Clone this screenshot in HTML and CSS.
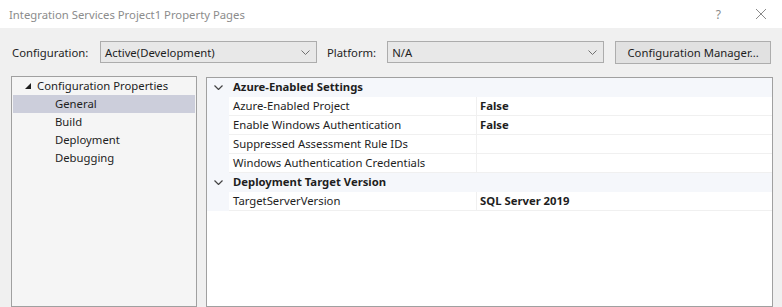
FILE: index.html
```html
<!DOCTYPE html>
<html lang="en">
<head>
  <meta charset="UTF-8" />
  <title>Integration Services Project1 Property Pages</title>
  <link rel="stylesheet" href="styles.css">
</head>
<body>
  <div class="dialog">
    <div class="titlebar">
      <span class="title">Integration Services Project1 Property Pages</span>
      <span class="help">?</span>
      <svg class="close" width="12" height="12" viewBox="0 0 12 12">
        <path d="M1 1 L11 11 M11 1 L1 11" stroke="#8a8a8a" stroke-width="1" fill="none"/>
      </svg>
    </div>

    <div class="toolbar">
      <span class="label">Configuration:</span>
      <div class="combo combo-config">
        <span>Active(Development)</span>
        <svg width="9" height="5" viewBox="0 0 9 5"><path d="M0.5 0.5 L4.5 4.5 L8.5 0.5" stroke="#707070" fill="none"/></svg>
      </div>
      <span class="label label-platform">Platform:</span>
      <div class="combo combo-platform">
        <span>N/A</span>
        <svg width="9" height="5" viewBox="0 0 9 5"><path d="M0.5 0.5 L4.5 4.5 L8.5 0.5" stroke="#707070" fill="none"/></svg>
      </div>
      <button class="btn">Configuration Manager...</button>
    </div>

    <div class="main">
      <div class="tree">
        <div class="tree-item root">
          <svg class="expander" width="6" height="6" viewBox="0 0 6 6"><polygon points="6,0 6,6 0,6" fill="#1e1e1e"/></svg>
          Configuration Properties
        </div>
        <div class="tree-item child selected">General</div>
        <div class="tree-item child">Build</div>
        <div class="tree-item child">Deployment</div>
        <div class="tree-item child">Debugging</div>
      </div>

      <div class="grid">
        <div class="row category">
          <div class="gutter"><svg width="9" height="5" viewBox="0 0 9 5"><path d="M0.5 0.5 L4.5 4.5 L8.5 0.5" stroke="#444" stroke-width="1.2" fill="none"/></svg></div>
          <div class="cat-name">Azure-Enabled Settings</div>
        </div>
        <div class="row">
          <div class="gutter"></div>
          <div class="name">Azure-Enabled Project</div>
          <div class="value">False</div>
        </div>
        <div class="row">
          <div class="gutter"></div>
          <div class="name">Enable Windows Authentication</div>
          <div class="value">False</div>
        </div>
        <div class="row">
          <div class="gutter"></div>
          <div class="name">Suppressed Assessment Rule IDs</div>
          <div class="value"></div>
        </div>
        <div class="row">
          <div class="gutter"></div>
          <div class="name">Windows Authentication Credentials</div>
          <div class="value"></div>
        </div>
        <div class="row category">
          <div class="gutter"><svg width="9" height="5" viewBox="0 0 9 5"><path d="M0.5 0.5 L4.5 4.5 L8.5 0.5" stroke="#444" stroke-width="1.2" fill="none"/></svg></div>
          <div class="cat-name">Deployment Target Version</div>
        </div>
        <div class="row">
          <div class="gutter"></div>
          <div class="name">TargetServerVersion</div>
          <div class="value">SQL Server 2019</div>
        </div>
      </div>
    </div>
  </div>
</body>
</html>
```

FILE: styles.css
```css
body {
  margin: 0;
  font-family: "Noto Sans", "Open Sans", sans-serif;
  font-size: 11.3px;
  color: #1e1e1e;
  background: #f0f0f0;
}

.dialog {
  width: 782px;
  height: 307px;
  overflow: hidden;
  display: flex;
  flex-direction: column;
}

.titlebar {
  height: 28px;
  background: #ffffff;
  display: flex;
  align-items: center;
  padding-left: 9px;
  flex-shrink: 0;
}

.title {
  color: #8c8c8c;
  flex: 1;
}

.help {
  color: #8a8a8a;
  font-size: 12px;
  margin-right: 34px;
}

.close {
  margin-right: 15px;
}

.toolbar {
  display: flex;
  align-items: center;
  padding: 13px 0 0 12px;
  height: 22px;
}

.label {
  width: 88px;
}

.label-platform {
  width: auto;
  margin: 0 11px 0 10px;
}

.combo {
  box-sizing: border-box;
  height: 22px;
  width: 217px;
  background: #e8e8e8;
  border: 1px solid #acacac;
  display: flex;
  align-items: center;
  justify-content: space-between;
  padding: 0 6px 0 4px;
}

.btn {
  box-sizing: border-box;
  height: 23px;
  width: 156px;
  margin-left: 11px;
  background: #e1e1e1;
  border: 1px solid #adadad;
  font-family: inherit;
  font-size: 11.3px;
  color: #1e1e1e;
  padding: 0;
}

.main {
  display: flex;
  gap: 9px;
  padding: 13px 9px 0 11px;
  flex: 1;
}

.tree {
  box-sizing: border-box;
  width: 186px;
  background: #f5f5f5;
  border: 1px solid #a0a0a0;
  padding: 0 1px;
}

.tree-item {
  height: 18px;
  line-height: 18px;
  padding-left: 42px;
}

.tree-item.root {
  padding-left: 12px;
  display: flex;
  align-items: center;
}

.expander {
  margin-right: 6px;
}

.tree-item.selected {
  background: #cccedb;
}

.grid {
  box-sizing: border-box;
  flex: 1;
  background: #ffffff;
  border: 1px solid #a0a0a0;
  margin-top: 1px;
}

.row {
  display: flex;
  height: 19px;
  line-height: 18px;
}

.gutter {
  width: 22px;
  background: #f5f7fb;
  display: flex;
  align-items: center;
  justify-content: center;
  flex-shrink: 0;
}

.category {
  background: #f5f7fb;
}

.cat-name {
  font-weight: bold;
  padding-left: 4px;
}

.name {
  box-sizing: border-box;
  width: 248px;
  padding-left: 4px;
  border-bottom: 1px solid #f0f0f0;
  border-right: 1px solid #f0f0f0;
}

.value {
  flex: 1;
  padding-left: 3px;
  font-weight: bold;
  border-bottom: 1px solid #f0f0f0;
}
```
